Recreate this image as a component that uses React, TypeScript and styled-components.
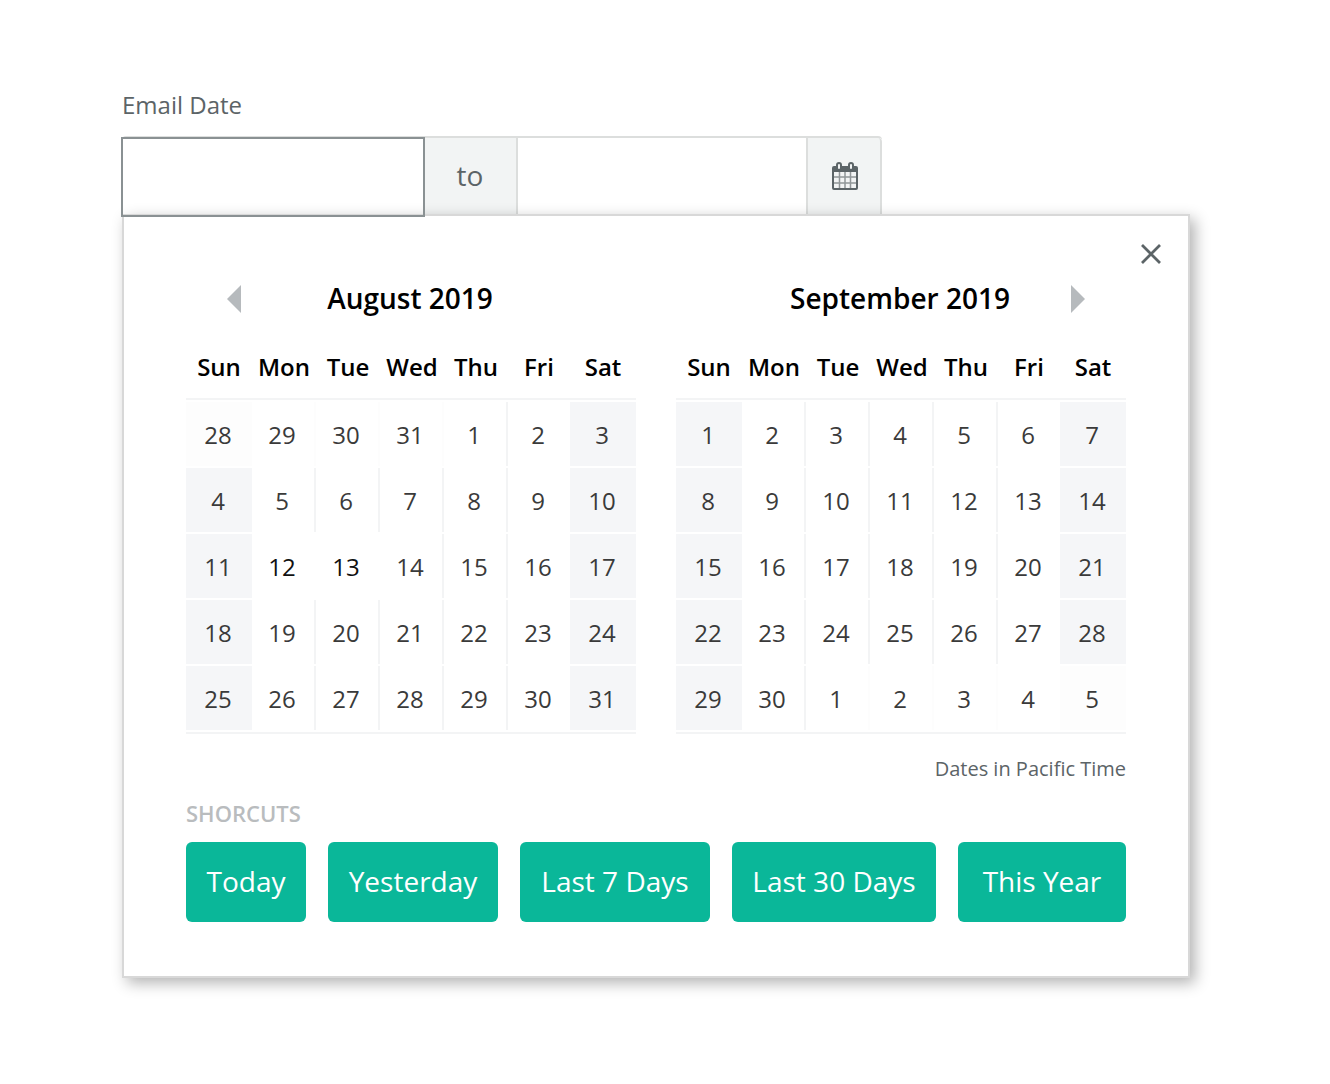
import React from "react";
import styled, { createGlobalStyle, css } from "styled-components";

const GlobalStyle = createGlobalStyle`
  *, *::before, *::after { box-sizing: border-box; }
  body {
    margin: 0;
    background: #fff;
    color: #333;
    font-family: "Open Sans", "Noto Sans", sans-serif;
  }
  button, input { font: inherit; color: inherit; }
`;

const Page = styled.main`
  padding: 89px 140px 106px 122px;
`;

const FieldLabel = styled.label`
  display: block;
  margin-bottom: 15px;
  font-size: 24px;
  line-height: 32px;
  color: #5c6467;
`;

const FieldGroup = styled.div`
  display: grid;
  grid-template-columns: minmax(0, 302fr) 92px minmax(0, 290fr) 76px;
  max-width: 760px;
  height: 80px;
  border-top: 2px solid #dcdedd;
  border-radius: 4px 4px 0 0;
`;

const DateInput = styled.input<{ $active?: boolean }>`
  min-width: 0;
  padding: 0 20px;
  border: 0;
  border-left: ${(p) => (p.$active ? "0" : "2px solid #dcdedd")};
  background: transparent;
  font-size: 28px;
  outline: none;
  ${(p) =>
    p.$active &&
    css`
      position: relative;
      z-index: 2;
      outline: 2px solid #8a9193;
      outline-offset: -1px;
    `}
`;

const Separator = styled.span`
  display: flex;
  align-items: center;
  justify-content: center;
  padding-bottom: 4px;
  background: #f2f4f4;
  font-size: 28px;
  color: #5c6467;
`;

const CalendarToggle = styled.button`
  display: flex;
  align-items: center;
  justify-content: center;
  padding: 0 0 2px;
  border: 2px solid #dcdedd;
  border-width: 0 2px;
  border-radius: 0 4px 0 0;
  background: #f2f4f4;
  color: #5c6467;
  cursor: pointer;
`;

const Panel = styled.section`
  position: relative;
  z-index: 1;
  margin-top: -2px;
  border: 2px solid #d8d8d8;
  background: #fff;
  box-shadow: 5px 5px 14px rgba(0, 0, 0, 0.3);
`;

const PanelBar = styled.div`
  display: flex;
  justify-content: flex-end;
  padding: 20px 19px 0;
`;

const IconButton = styled.button`
  display: flex;
  align-items: center;
  justify-content: center;
  width: 36px;
  height: 36px;
  padding: 0;
  border: 0;
  background: none;
  color: #5c6467;
  cursor: pointer;
`;

const ArrowButton = styled(IconButton)`
  padding-top: 2px;
  color: #b6babd;
`;

const PanelBody = styled.div`
  padding: 6px 62px 54px;
`;

const Months = styled.div`
  display: grid;
  grid-template-columns: repeat(2, minmax(0, 1fr));
  gap: 40px;
`;

const MonthHeader = styled.header`
  display: grid;
  grid-template-columns: 36px 1fr 36px;
  align-items: center;
  height: 40px;
  margin-bottom: 30px;
  padding: 0 30px;
`;

const MonthTitle = styled.h2`
  grid-column: 2;
  margin: 0;
  padding-right: 2px;
  text-align: center;
  font-size: 28px;
  font-weight: 600;
  line-height: 40px;
  color: #000;
`;

const MonthTable = styled.table`
  width: 100%;
  table-layout: fixed;
  border-collapse: separate;
  border-spacing: 0 2px;
  border-bottom: 2px solid #f3f4f5;
`;

const EdgeCol = styled.col`
  width: 66px;
`;

const FridayCol = styled.col`
  width: 62px;
`;

const Weekday = styled.th`
  height: 50px;
  padding: 0 0 14px;
  border-bottom: 2px solid #f3f4f5;
  font-size: 24px;
  font-weight: 600;
  line-height: 34px;
  color: #000;
  white-space: nowrap;
`;

type CellProps = { $weekend: boolean; $outside: boolean; $picked: boolean; $rule: boolean };

const DayCell = styled.td<CellProps>`
  height: 64px;
  padding: 0 ${(p) => (p.$rule && p.$weekend ? 0 : 2)}px 0 0;
  border-right: ${(p) => (p.$rule ? "2px solid" : "0")};
  border-right-color: ${(p) =>
    p.$picked ? "transparent" : p.$outside ? "#fdfdfd" : p.$weekend ? "#f5f6f8" : "#f3f4f5"};
  background: ${(p) => (p.$weekend ? (p.$outside ? "#fdfdfd" : "#f5f6f8") : "transparent")};
`;

const DayButton = styled.button<{ $picked: boolean }>`
  display: block;
  width: 100%;
  height: 64px;
  padding: 2px 0 0;
  border: 0;
  background: none;
  font-size: 24px;
  line-height: 62px;
  text-align: center;
  color: ${(p) => (p.$picked ? "#111" : "#3a3a3a")};
  cursor: pointer;
`;

const ZoneNote = styled.p`
  margin: 20px 0 14px;
  text-align: right;
  font-size: 20px;
  line-height: 30px;
  color: #5c6467;
`;

const ShortcutsTitle = styled.h3`
  margin: 0 0 14px;
  font-size: 22px;
  font-weight: 600;
  line-height: 30px;
  color: #b9bcbe;
`;

const Shortcuts = styled.div`
  display: grid;
  grid-template-columns: 120fr 170fr 190fr 204fr 168fr;
  gap: 22px;
`;

const ShortcutButton = styled.button`
  height: 80px;
  padding: 0 0 2px;
  border: 0;
  border-radius: 6px;
  background: #0ab799;
  color: #fff;
  font-size: 28px;
  white-space: nowrap;
  cursor: pointer;
`;

const CalendarIcon = () => (
  <svg width="30" height="28" viewBox="-3 0 30 28" fill="none" aria-hidden="true">
    <path
      fill="currentColor"
      fillRule="evenodd"
      d="M2 4h22a2 2 0 0 1 2 2v20a2 2 0 0 1-2 2H2a2 2 0 0 1-2-2V6a2 2 0 0 1 2-2zM2 10v15.500q0 .5.500.5h21q.5 0 .5-.5V10z"
    />
    <path d="M7.500 10v16M13 10v16M18.500 10v16M2 15h22M2 21h22" stroke="currentColor" strokeOpacity=".65" strokeWidth="1.500" />
    <rect x="5" y="1" width="4" height="7" rx="2" fill="#f2f4f4" stroke="currentColor" strokeWidth="2" />
    <rect x="17" y="1" width="4" height="7" rx="2" fill="#f2f4f4" stroke="currentColor" strokeWidth="2" />
  </svg>
);

const CloseIcon = () => (
  <svg width="22" height="22" viewBox="0 0 22 22" aria-hidden="true">
    <path d="M2 2l18 18M20 2L2 20" stroke="currentColor" strokeWidth="2.800" />
  </svg>
);

const Arrow = ({ right }: { right?: boolean }) => (
  <svg width="14" height="28" viewBox="0 0 14 28" fill="currentColor" aria-hidden="true">
    <path d={right ? "M0 0l14 14L0 28z" : "M14 0L0 14l14 14z"} />
  </svg>
);

const WEEKDAYS = ["Sun", "Mon", "Tue", "Wed", "Thu", "Fri", "Sat"];
const SHORTCUTS = ["Today", "Yesterday", "Last 7 Days", "Last 30 Days", "This Year"];

type MonthProps = {
  title: string;
  year: number;
  month: number;
  picked?: number[];
  nav: "prev" | "next";
};

function Month({ title, year, month, picked = [], nav }: MonthProps) {
  const offset = new Date(year, month, 1).getDay();
  const weeks = Array.from({ length: 5 }, (_, w) =>
    WEEKDAYS.map((_, d) => new Date(year, month, 1 - offset + w * 7 + d))
  );
  return (
    <section>
      <MonthHeader>
        {nav === "prev" && (
          <ArrowButton type="button" aria-label="Previous month">
            <Arrow />
          </ArrowButton>
        )}
        <MonthTitle>{title}</MonthTitle>
        {nav === "next" && (
          <ArrowButton type="button" aria-label="Next month">
            <Arrow right />
          </ArrowButton>
        )}
      </MonthHeader>
      <MonthTable aria-label={title}>
        <colgroup>
          <EdgeCol />
          <col span={4} />
          <FridayCol />
          <EdgeCol />
        </colgroup>
        <thead>
          <tr>
            {WEEKDAYS.map((name) => (
              <Weekday key={name} scope="col">
                {name}
              </Weekday>
            ))}
          </tr>
        </thead>
        <tbody>
          {weeks.map((week, w) => (
            <tr key={w}>
              {week.map((date, d) => {
                const outside = date.getMonth() !== month;
                const isPicked = !outside && picked.includes(date.getDate());
                return (
                  <DayCell
                    key={d}
                    $weekend={d === 0 || d === 6}
                    $outside={outside}
                    $picked={isPicked}
                    $rule={d < 5}
                  >
                    <DayButton type="button" $picked={isPicked}>
                      {date.getDate()}
                    </DayButton>
                  </DayCell>
                );
              })}
            </tr>
          ))}
        </tbody>
      </MonthTable>
    </section>
  );
}

export default function App() {
  return (
    <>
      <GlobalStyle />
      <Page>
        <FieldLabel htmlFor="date-from">Email Date</FieldLabel>
        <FieldGroup>
          <DateInput id="date-from" type="text" $active />
          <Separator>to</Separator>
          <DateInput type="text" aria-label="Email Date end" />
          <CalendarToggle type="button" aria-label="Toggle calendar">
            <CalendarIcon />
          </CalendarToggle>
        </FieldGroup>
        <Panel aria-label="Choose dates">
          <PanelBar>
            <IconButton type="button" aria-label="Close">
              <CloseIcon />
            </IconButton>
          </PanelBar>
          <PanelBody>
            <Months>
              <Month title="August 2019" year={2019} month={7} picked={[12, 13]} nav="prev" />
              <Month title="September 2019" year={2019} month={8} nav="next" />
            </Months>
            <ZoneNote>Dates in Pacific Time</ZoneNote>
            <ShortcutsTitle>SHORCUTS</ShortcutsTitle>
            <Shortcuts>
              {SHORTCUTS.map((name) => (
                <ShortcutButton key={name} type="button">
                  {name}
                </ShortcutButton>
              ))}
            </Shortcuts>
          </PanelBody>
        </Panel>
      </Page>
    </>
  );
}
